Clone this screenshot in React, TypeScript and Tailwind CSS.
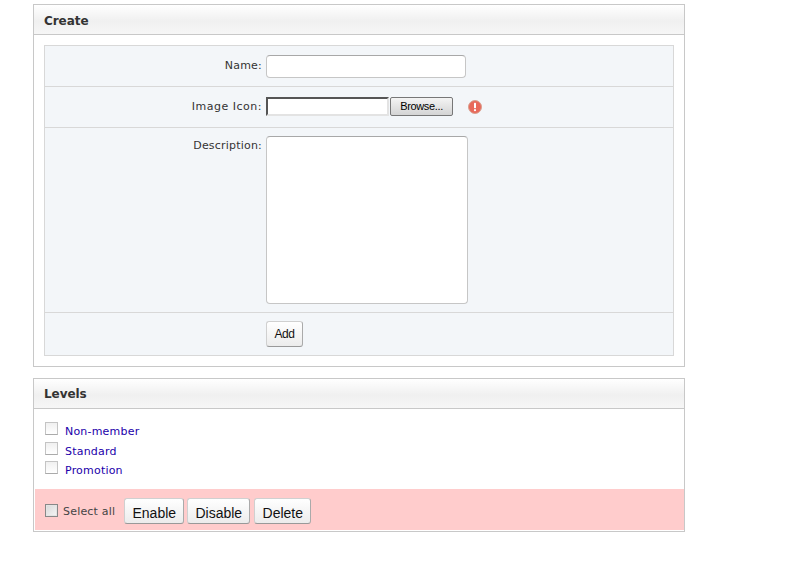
const verdana = "font-['DejaVu_Sans',sans-serif]";

function PanelHeader({ title, className }: { title: string; className: string }) {
  return (
    <div className={`h-[30px] border-b border-[#c8c8c8] bg-gradient-to-b from-white via-[#f0f0f0] via-55% to-[#f6f6f6] pl-[10px] flex items-center ${className}`}>
      <h2 className="text-[12px] font-bold text-[#333] font-['DejaVu_Sans',sans-serif] tracking-[-0.05px]">{title}</h2>
    </div>
  );
}

function FormRow({ label, className, labelClass, children }: { label?: string; className: string; labelClass?: string; children: React.ReactNode }) {
  return (
    <div className={`flex ${className}`}>
      <label className={`w-[217px] text-right text-[11px] leading-[14px] text-[#333] ${labelClass}`}>{label}</label>
      <div className="ml-[4px]">{children}</div>
    </div>
  );
}

function ActionButton({ children, className }: { children: React.ReactNode; className: string }) {
  return (
    <button className={`h-[26px] rounded-[3px] border border-[#d0d0d0] border-r-[#aaa] border-b-[#999] bg-gradient-to-b from-white to-[#ececec] pt-[3px] text-[14px] leading-none text-[#111] font-['Liberation_Sans',sans-serif] ${className}`}>
      {children}
    </button>
  );
}

function LevelRow({ name, className }: { name: string; className: string }) {
  return (
    <div className={`flex items-start ${className}`}>
      <span className="h-[13px] w-[13px] border border-[#c4c4c4] border-b-[#aaa] bg-gradient-to-b from-[#f0f0f0] to-white" />
      <a className="ml-[7px] mt-[3px] text-[11px] leading-[14px] text-[#2200aa] tracking-[0.2px]">{name}</a>
    </div>
  );
}

export default function App() {
  return (
    <div className={`min-h-[562px] bg-white pt-[4px] pl-[33px] ${verdana}`}>
      <section className="w-[652px] h-[363px] border border-[#c8c8c8]">
        <PanelHeader title="Create" className="pt-[2px]" />
        <div className="mx-[10px] mt-[10px] border border-[#d8d8d8] bg-[#f3f6f9]">
          <FormRow label="Name:" labelClass="mt-[4px] tracking-[0.2px]" className="h-[41px] pt-[9px] border-b border-[#d8d8d8]">
            <input className="block h-[23px] w-[200px] rounded-[4px] border border-[#c6c6c6] border-t-[#a8a8a8] bg-white" />
          </FormRow>
          <FormRow label="Image Icon:" labelClass="mt-[1px] tracking-[0.5px]" className="h-[41px] pt-[12px] border-b border-[#d8d8d8]">
            <div className="-mt-[2px] flex items-center">
              <span className="h-[19px] w-[123px] border-2 border-[#e3e3e3] border-t-[#555] border-l-[#555] bg-white" />
              <button className="ml-[1px] h-[19px] w-[63px] rounded-[2px] border border-[#777] bg-gradient-to-b from-[#f4f4f4] to-[#d4d4d4] text-[11px] leading-none tracking-[-0.35px] text-black font-['Liberation_Sans',sans-serif]">
                Browse...
              </button>
              <svg className="ml-[15px]" width="14" height="14" viewBox="0 0 14 14">
                <circle cx="7" cy="7" r="6.5" fill="#e8695a" stroke="#d9a090" strokeWidth="1" />
                <rect x="6" y="2.8" width="2" height="5.4" rx="0.6" fill="#fff" />
                <circle cx="7" cy="10.2" r="1.1" fill="#fff" />
              </svg>
            </div>
          </FormRow>
          <FormRow label="Description:" labelClass="mt-[3px] tracking-[0.2px]" className="h-[185px] pt-[8px] border-b border-[#d8d8d8]">
            <textarea className="block h-[168px] w-[202px] resize-none rounded-[4px] border border-[#c6c6c6] border-t-[#a8a8a8] bg-white" />
          </FormRow>
          <FormRow className="h-[42px] pt-[8px]">
            <button className="h-[26px] w-[37px] rounded-[3px] border border-[#d0d0d0] border-r-[#aaa] border-b-[#999] bg-gradient-to-b from-white to-[#ececec] text-[12px] tracking-[-0.4px] text-[#111] font-['Liberation_Sans',sans-serif]">
              Add
            </button>
          </FormRow>
        </div>
      </section>

      <section className="mt-[11px] w-[652px] h-[154px] border border-[#c8c8c8]">
        <PanelHeader title="Levels" className="pt-[1px]" />
        <div className="h-[80px] pl-[11px] pt-[13px]">
          <LevelRow name="Non-member" className="h-[20px]" />
          <LevelRow name="Standard" className="h-[19px]" />
          <LevelRow name="Promotion" className="h-[20px]" />
        </div>
        <div className="ml-[1px] flex h-[41px] items-center bg-[#ffcccc] pl-[10px]">
          <span className="mt-[2px] h-[13px] w-[13px] border border-[#888] bg-gradient-to-br from-[#d8d8d8] to-[#f6f6f6] shadow-[inset_0_0_0_1px_#e4e4e4]" />
          <span className="ml-[5px] mt-[5px] text-[11px] text-[#444] tracking-[0.2px]">Select all</span>
          <div className="ml-[9px] flex gap-[3px] pt-[3px]">
            <ActionButton className="w-[60px]">Enable</ActionButton>
            <ActionButton className="w-[63px]">Disable</ActionButton>
            <ActionButton className="ml-[1px] w-[57px]">Delete</ActionButton>
          </div>
        </div>
      </section>
    </div>
  );
}
